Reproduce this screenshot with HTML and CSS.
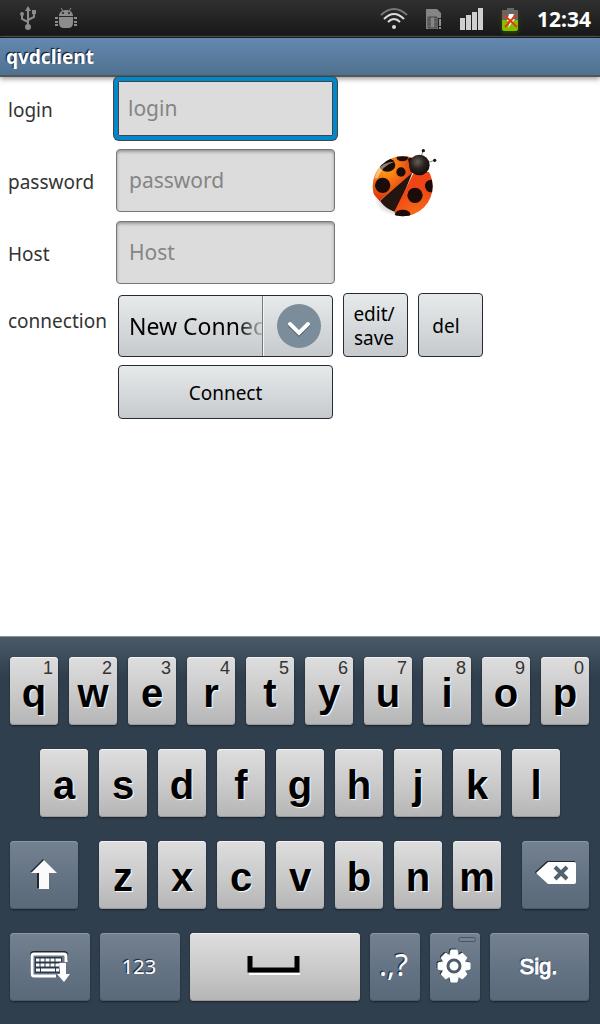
FILE: index.html
```html
<!DOCTYPE html>
<html lang="en">
<head>
<meta charset="utf-8">
<meta name="viewport" content="width=device-width, initial-scale=1">
<title>qvdclient</title>
<link rel="stylesheet" href="styles.css">
</head>
<body>
<div class="status">
  <div class="status-group notices">
    <svg width="18" height="26" viewBox="0 0 18 26" fill="none" stroke="#8c8c8c" stroke-width="2" aria-label="USB">
      <path d="M9 4V20M9 17L3 14V10M9 15L15 12V9"/><path d="M6 6L9 1L12 6Z M13 5h4v4h-4Z" fill="#8c8c8c" stroke="none"/><circle cx="3" cy="9" r="2" fill="#8c8c8c" stroke="none"/><circle cx="9" cy="22" r="3" fill="#8c8c8c" stroke="none"/>
    </svg>
    <svg width="22" height="22" viewBox="0 0 22 22" fill="#8c8c8c" aria-label="Debugging">
      <path d="M4 9C4 1 18 1 18 9Z"/><path d="M4 10H18V16Q18 21 13 21H9Q4 21 4 16Z"/><path d="M8 4L6 1M14 4L16 1" stroke="#8c8c8c"/><path d="M0 11h3M0 15h3M0 18h3M19 11h3M19 15h3M19 18h3" stroke="#8c8c8c" stroke-width="2"/><circle cx="8" cy="6" r="1" fill="#222"/><circle cx="14" cy="6" r="1" fill="#222"/>
    </svg>
  </div>
  <div class="status-group system">
    <svg width="28" height="24" viewBox="0 0 28 24" fill="none" stroke-width="2" aria-label="Wi-Fi">
      <path d="M1 8Q14 -4 27 8" stroke="#777"/><path d="M4 12Q14 2 24 12M8 15Q14 9 20 15" stroke="#ddd"/><circle cx="14" cy="20" r="2" fill="#ddd"/>
    </svg>
    <svg class="sim" width="16" height="21" viewBox="0 0 16 21" aria-label="SIM">
      <path d="M0 0H11L15 4V9H12V20H0Z" fill="#858585"/><path d="M13 10h2v7h-2zM13 18h2v2h-2z" fill="#909090"/><path d="M2 8h9v11h-9zM4 8v11M9 8v11M2 11h2M2 15h2M9 11h2M9 15h2" fill="none" stroke="#444"/>
    </svg>
    <svg width="24" height="22" viewBox="0 0 24 22" fill="#cfcfcf" aria-label="Signal">
      <path d="M0 10h5v12h-5zM6 7h5v15h-5zM12 4h5v18h-5zM18 0h5v22h-5z"/>
    </svg>
    <svg class="battery" width="17" height="23" viewBox="0 0 17 23" aria-label="Battery">
      <path d="M5 0h7v2h4v10H0V2h5z" fill="#666"/><path d="M0 12h16v9q0 2-2 2H2q-2 0-2-2z" fill="#85bd00"/><path d="M7 6H12L10 11H13L6 20L8 13H5Z" fill="#fff"/><path d="M2 7L15 19M14 7L3 19" stroke="#e43b16" stroke-width="2"/>
    </svg>
    <time class="clock">12:34</time>
  </div>
</div>
<h1 class="title">qvdclient</h1>
<main class="content">
  <form class="form">
    <label for="login">login</label>
    <div class="line"><input id="login" class="field active" type="text" placeholder="login"></div>
    <label for="password">password</label>
    <div class="line">
      <input id="password" class="field" type="password" placeholder="password">
      <svg class="ladybug" width="70" height="70" viewBox="60 56 210 210" aria-label="Ladybug">
        <defs>
          <radialGradient id="shell" cx="35%" cy="28%" r="75%"><stop offset="0" stop-color="#ffa80c"/><stop offset=".5" stop-color="#f36a16"/><stop offset="1" stop-color="#d92d0a"/></radialGradient>
          <radialGradient id="wing" gradientUnits="userSpaceOnUse" cx="205" cy="270" r="95"><stop offset="0" stop-color="#ffb000"/><stop offset=".3" stop-color="#f66817"/><stop offset="1" stop-color="#ef4516"/></radialGradient>
          <radialGradient id="head" cx="42%" cy="35%" r="65%"><stop offset="0" stop-color="#66605b"/><stop offset=".5" stop-color="#2b2320"/><stop offset="1" stop-color="#120b08"/></radialGradient>
          <radialGradient id="shade"><stop offset=".6" stop-color="#aaa" stop-opacity=".6"/><stop offset="1" stop-color="#aaa" stop-opacity="0"/></radialGradient>
          <clipPath id="body"><circle cx="158" cy="168" r="90"/></clipPath>
        </defs>
        <ellipse cx="145" cy="208" rx="72" ry="50" fill="url(#shade)"/>
        <g clip-path="url(#body)">
          <path d="M190 120L90 212Q110 240 140 245Z" fill="#24150e"/>
          <path d="M190 125L89 212L60 180V70H190Z" fill="url(#shell)"/>
          <path d="M192 125L132 246L160 262H255V125Z" fill="url(#wing)"/>
          <path d="M174 85L182 125L192 127L220 95V70Z" fill="#170e0a"/>
          <g fill="#1a0c06"><circle cx="98" cy="165" r="23"/><circle cx="153" cy="125" r="14"/><ellipse cx="112" cy="104" rx="24" ry="20"/><ellipse cx="157" cy="82" rx="17" ry="11"/><circle cx="195" cy="195" r="23"/><ellipse cx="243" cy="167" rx="18" ry="19"/><ellipse cx="158" cy="252" rx="23" ry="14"/></g>
          <path d="M74 145Q82 95 134 94Q98 104 83 143Z" fill="#fff" opacity=".48"/>
        </g>
        <path d="M213 80L220 59M232 97L254 90" stroke="#444" stroke-width="2"/><circle cx="220" cy="61" r="5" fill="#1b1512"/><circle cx="254" cy="90" r="5" fill="#1b1512"/>
        <circle cx="208" cy="104" r="31" fill="url(#head)"/>
      </svg>
    </div>
    <label for="host">Host</label>
    <div class="line"><input id="host" class="field" type="text" placeholder="Host"></div>
    <label class="upper" for="connection">connection</label>
    <div class="line bottom">
      <div class="spinner">
        <select id="connection"><option>New Connection</option></select>
        <span class="arrow">
          <svg width="46" height="46" viewBox="0 0 46 46" fill="none" aria-hidden="true"><circle cx="24" cy="23" r="22" fill="#7b8c9b"/><path d="M15 22L24 31L33 22" stroke="#3c4853" stroke-width="4" stroke-linecap="round"/><path d="M15 21L24 30L33 21" stroke="#fff" stroke-width="4" stroke-linecap="round"/></svg>
        </span>
      </div>
      <button class="button small" type="button">edit/<br>save</button>
      <button class="button small" type="button">del</button>
    </div>
    <div class="line submit"><button class="button connect" type="button">Connect</button></div>
  </form>
</main>
<div class="keyboard">
  <div class="row">
    <button class="key"><small>1</small>q</button><button class="key"><small>2</small>w</button><button class="key"><small>3</small>e</button><button class="key"><small>4</small>r</button><button class="key"><small>5</small>t</button><button class="key"><small>6</small>y</button><button class="key"><small>7</small>u</button><button class="key"><small>8</small>i</button><button class="key"><small>9</small>o</button><button class="key"><small>0</small>p</button>
  </div>
  <div class="row inset">
    <button class="key">a</button><button class="key">s</button><button class="key">d</button><button class="key">f</button><button class="key">g</button><button class="key">h</button><button class="key">j</button><button class="key">k</button><button class="key">l</button>
  </div>
  <div class="row shift-row">
    <button class="key dark" aria-label="Shift"><svg width="28" height="32" viewBox="0 0 28 32"><path d="M13 0L0 13H7V29H17V13H25Z" fill="#1d2833"/><path d="M14 1L1 14H9V30H19V14H27Z" fill="#fafafa"/></svg></button>
    <div class="row letters">
      <button class="key">z</button><button class="key">x</button><button class="key">c</button><button class="key">v</button><button class="key">b</button><button class="key">n</button><button class="key">m</button>
    </div>
    <button class="key dark erase" aria-label="Backspace"><svg width="42" height="24" viewBox="0 0 42 24"><path d="M0 11L12 0H40V2H13L1 13Z" fill="#1d2833"/><path d="M1 12L13 1H39Q41 1 41 3V21Q41 23 39 23H13Z" fill="#fff"/><path d="M20 6L32 18M32 6L20 18" stroke="#536271" stroke-width="4"/></svg></button>
  </div>
  <div class="row bottom-row">
    <button class="key dark" aria-label="Hide keyboard"><svg width="42" height="32" viewBox="0 0 42 32" fill="none">
      <path d="M2 24V4Q2 1 5 1H35Q38 1 38 4V9" stroke="#1d2833" stroke-width="2"/><path d="M27 25H5Q3 25 3 22V5Q3 3 5 3H35Q37 3 37 5V11" stroke="#fff" stroke-width="3"/>
      <path d="M6 6H33V11H31V22H6Z" fill="#2b3947"/>
      <path d="M7 9h25M7 14h23M7 19h4M12 19h14M27 19h3" stroke="#fff" stroke-width="3"/><path d="M11 6V16M16 6V16M21 6V16M26 6V16" stroke="#2b3947"/><path d="M30 12H37V23H41L35 31L28 23H31Z" fill="#fff"/>
    </svg></button>
    <button class="key dark numeric">123</button>
    <button class="key space" aria-label="Space"><svg width="54" height="20" viewBox="0 0 54 20" fill="none"><path d="M2 18H53" stroke="#fff" stroke-width="2"/><path d="M3 0V14H50V0" stroke="#000" stroke-width="5"/></svg></button>
    <button class="key dark punct">.,?</button>
    <button class="key dark options" aria-label="Settings"><i></i><svg width="34" height="34" viewBox="-17 -17 34 34">
      <g fill="#fff" stroke="#fff" stroke-linejoin="round"><circle r="12"/><path d="M-4-12L-3-16H3L4-12ZM-4 12L-3 16H3L4 12ZM-12-4L-16-3V3L-12 4ZM12-4L16-3V3L12 4Z"/><path transform="rotate(45)" d="M-4-12L-3-15H3L4-12ZM-4 12L-3 15H3L4 12ZM-12-4L-15-3V3L-12 4ZM12-4L15-3V3L12 4Z"/></g>
      <circle r="6" fill="none" stroke="#4c5c6b" stroke-width="3"/></svg></button>
    <button class="key dark next">Sig.</button>
  </div>
</div>
</body>
</html>
```

FILE: styles.css
```css
* { box-sizing: border-box; }
body {
  margin: 0;
  min-height: 100vh;
  display: flex;
  flex-direction: column;
  background: #fff;
  font-family: "Noto Sans", "Open Sans", sans-serif;
  color: #333;
}
button, input, select { font: inherit; margin: 0; }
svg { display: block; flex: none; }

.status {
  height: 38px;
  padding: 0 9px 0 19px;
  display: flex;
  justify-content: space-between;
  background: linear-gradient(#303030, #171717);
  border-bottom: 1px solid #000;
  box-shadow: inset 0 -1px #484848;
}
.status-group { display: flex; align-items: center; }
.notices { gap: 18px; }
.notices svg { margin-bottom: 2px; }
.system { gap: 18px; }
.system svg { margin-top: 1px; }
.battery { filter: drop-shadow(0 2px 2px #2a4d00); }
.clock { color: #fff; font-size: 21px; line-height: 36px; font-weight: 700; }

.title {
  margin: 0;
  height: 39px;
  padding: 0 6px;
  background: linear-gradient(#6488b0, #4f7190);
  border-bottom: 2px solid #555;
  box-shadow: 0 2px 5px #999;
  color: #fff;
  font-size: 19px;
  line-height: 38px;
  font-weight: 700;
  text-shadow: -1px -1px 1px #111;
}

.content { flex: 1; }
.form {
  display: grid;
  grid-template-columns: 108px 1fr;
  grid-auto-rows: 64px;
  gap: 8px 0;
  padding-left: 8px;
  align-items: center;
  font-size: 19px;
}
.form label { line-height: 24px; padding-top: 2px; }
.form .upper { padding-bottom: 10px; }
.line { display: flex; align-items: flex-start; height: 64px; }
.field {
  width: 219px;
  height: 63px;
  padding: 0 12px 2px;
  border: 1px solid #777;
  border-radius: 4px;
  background: #dcdcdc;
  box-shadow: inset 0 2px 3px #999;
  color: #000;
  font-size: 21px;
  outline: none;
}
.field::placeholder { color: #858585; opacity: 1; }
.active {
  width: 223px;
  margin-left: -2px;
  padding: 0 10px 2px;
  border: 4px solid #0088cf;
  border-radius: 5px;
  position: relative;
  box-shadow: inset 0 0 0 1px #444, 0 0 0 1px #444;
}
.ladybug { margin-left: 35px; }

.bottom { align-items: flex-end; gap: 10px; padding-left: 2px; }
.button, .spinner {
  border: 1px solid #272b38;
  border-radius: 4px;
  background: linear-gradient(#e6eaeb, #c6cacd);
  color: #000;
}
.button { padding: 2px 0 0; line-height: 24px; }
.spinner { display: flex; width: 215px; height: 62px; }
.spinner select {
  flex: 1;
  min-width: 0;
  appearance: none;
  border: 0;
  border-radius: 0;
  padding: 0 0 0 10px;
  background: transparent;
  color: #000;
  font-size: 23px;
  text-overflow: clip;
  -webkit-mask-image: linear-gradient(to right, #000 118px, transparent 148px);
  mask-image: linear-gradient(to right, #000 118px, transparent 148px);
}
.arrow {
  width: 70px;
  display: flex;
  align-items: center;
  justify-content: center;
  border-left: 1px solid #777;
  box-shadow: inset 1px 0 #f4f5f5;
}
.small { width: 65px; height: 64px; padding-right: 3px; }
.small + .small { padding-right: 9px; }
.submit { grid-column: 2; padding-left: 2px; }
.connect { width: 215px; height: 54px; }

.keyboard {
  display: flex;
  flex-direction: column;
  gap: 24px;
  padding: 20px 11px 23px 10px;
  border-top: 1px solid #8d9499;
  background: linear-gradient(#4b5a68, #303f4d 40px, #303f4d);
}
.row { display: flex; gap: 11px; height: 68px; }
.inset { padding: 0 29px 0 30px; }
.shift-row { gap: 21px; }
.shift-row > .dark { flex: 0 0 68px; }
.shift-row > .erase { flex-basis: 67px; padding-bottom: 4px; }
.letters { flex: 1; gap: 11px; }
.bottom-row { display: grid; grid-template-columns: 80fr 80fr 170fr 50fr 50fr 99fr; gap: 10px; }
.key {
  flex: 1 1 0;
  min-width: 0;
  padding: 4px 0 0;
  position: relative;
  display: flex;
  align-items: center;
  justify-content: center;
  border: 0;
  border-radius: 4px;
  background: linear-gradient(#dedede, #cbcbcb 50%, #b5b5b5);
  box-shadow: inset 0 1px #f2f2f2, inset 0 -1px #999, 0 1px 2px #17212b;
  color: #000;
  font-family: "Liberation Sans", Arial, sans-serif;
  font-size: 40px;
  line-height: 48px;
  font-weight: 700;
  text-shadow: 1px 1px 1px #fff;
}
.key small {
  position: absolute;
  top: 1px;
  right: 5px;
  color: #333;
  font: 400 18px/20px "Liberation Sans", Arial, sans-serif;
  text-shadow: none;
}
.key.dark {
  padding-top: 0;
  background: linear-gradient(#74818f, #657485 50%, #5a697a);
  box-shadow: inset 0 1px #8c98a5, inset 0 -1px #4b5968, 0 1px 2px #17212b;
  color: #fff;
  font-family: "Noto Sans", "Open Sans", sans-serif;
  font-size: 20px;
  font-weight: 400;
  text-shadow: -1px -1px 1px #18212b;
}
.key.space { padding: 0 2px 2px 0; }
.key.numeric { padding-right: 2px; }
.key.punct { font-size: 30px; padding: 0 3px 4px 0; }
.options svg { filter: drop-shadow(-1px -1px 0 #27333f); margin: 0 2px 3px 0; }
.options i {
  position: absolute;
  top: 4px;
  right: 4px;
  width: 18px;
  height: 5px;
  border: 1px solid #465564;
  border-radius: 3px;
  background: #74818f;
}
.key.next {
  padding-right: 2px;
  font-family: "Liberation Sans", Arial, sans-serif;
  font-size: 22px;
  -webkit-text-stroke: 1px #fff;
}
```
